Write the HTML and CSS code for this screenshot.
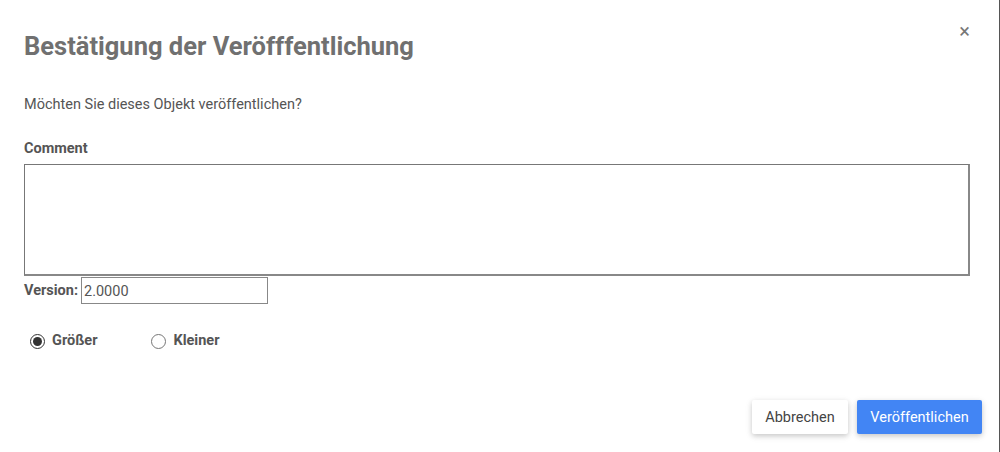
FILE: index.html
```html
<!DOCTYPE html>
<html lang="de">
<head>
<meta charset="utf-8">
<link rel="stylesheet" href="styles.css">
</head>
<body>
<div class="dialog">
  <div class="header">
    <h1 class="title">Bestätigung der Veröfffentlichung</h1>
    <span class="close">×</span>
  </div>
  <p class="question">Möchten Sie dieses Objekt veröffentlichen?</p>
  <label class="comment-label">Comment</label>
  <textarea class="comment"></textarea>
  <div class="version-row">
    <label class="version-label">Version:</label>
    <input class="version-input" type="text" value="2.0000">
  </div>
  <div class="radios">
    <label class="radio"><input type="radio" name="size" checked><span>Größer</span></label>
    <label class="radio"><input type="radio" name="size"><span>Kleiner</span></label>
  </div>
  <div class="footer">
    <button class="btn btn-cancel">Abbrechen</button>
    <button class="btn btn-primary">Veröffentlichen</button>
  </div>
</div>
</body>
</html>
```
FILE: styles.css
```css
html, body {
  margin: 0;
  padding: 0;
  background: #fff;
}
body {
  font-family: Roboto, "Liberation Sans", sans-serif;
  color: #555;
  width: 1000px;
  height: 452px;
  overflow: hidden;
}
.dialog {
  box-sizing: border-box;
  width: 1000px;
  height: 452px;
  padding: 0 31px 0 24px;
  border-right: 1px solid #555;
  display: flex;
  flex-direction: column;
}
.header {
  display: flex;
  justify-content: space-between;
  align-items: flex-start;
  height: 91px;
}
.title {
  margin: 31px 0 0;
  font-size: 25.5px;
  line-height: 30px;
  font-weight: 700;
  color: #707070;
}
.close {
  margin-top: 20px;
  margin-right: -2px;
  font-size: 20px;
  line-height: 22px;
  color: #777;
}
.question {
  margin: 0;
  font-size: 14.5px;
  line-height: 28px;
  color: #555;
  height: 36px;
}
.comment-label {
  display: block;
  margin-top: 12px;
  font-size: 14.5px;
  line-height: 20px;
  font-weight: 700;
  color: #555;
}
.comment {
  box-sizing: border-box;
  display: block;
  margin-top: 5px;
  width: 946px;
  height: 112px;
  border-style: solid;
  border-width: 1px 2px 2px 1px;
  border-color: #777 #888 #888 #777;
  resize: none;
  padding: 0;
  outline: none;
}
.version-row {
  display: flex;
  align-items: center;
  margin-top: 1px;
}
.version-label {
  font-size: 14.5px;
  font-weight: 700;
  color: #555;
  margin-right: 3px;
}
.version-input {
  box-sizing: border-box;
  width: 187px;
  height: 27px;
  border: 1px solid #888;
  padding: 2px 2px 0;
  font-family: Roboto, "Liberation Sans", sans-serif;
  font-size: 14.5px;
  color: #555;
  outline: none;
}
.radios {
  display: flex;
  margin-top: 29px;
  margin-left: 6px;
  gap: 54px;
}
.radio {
  display: flex;
  align-items: center;
  font-size: 14.5px;
  font-weight: 700;
  color: #555;
}
.radio input {
  margin: 0 7px 0 0;
  width: 15px;
  height: 15px;
  accent-color: #333;
}
.radio span {
  position: relative;
  top: -1px;
}
.footer {
  margin-top: auto;
  margin-bottom: 18px;
  display: flex;
  justify-content: flex-end;
  gap: 9px;
  margin-right: -14px;
}
.btn {
  height: 34px;
  border: none;
  border-radius: 2px;
  font-family: Roboto, "Liberation Sans", sans-serif;
  font-size: 14.5px;
  padding: 0 13px;
  box-shadow: 0 2px 5px rgba(0,0,0,0.16), 0 2px 8px rgba(0,0,0,0.08);
}
.btn-cancel {
  background: #fff;
  color: #444;
  width: 96px;
}
.btn-primary {
  background: #4285f4;
  color: #fff;
  width: 125px;
}
```
